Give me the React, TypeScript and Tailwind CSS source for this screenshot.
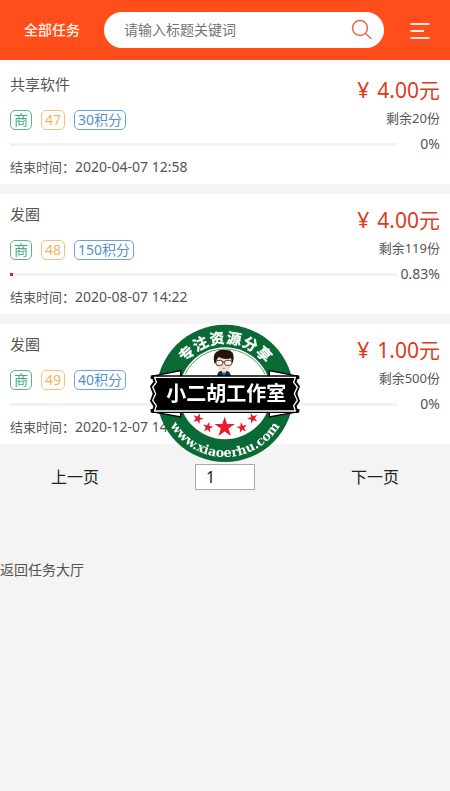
import React, { useState } from 'react';

interface Task {
  id: number;
  title: string;
  points: number;
  price: string;
  remaining: number;
  percent: number;
  endTime: string;
}

const tasks: Task[] = [
  { id: 47, title: '共享软件', points: 30, price: '4.00', remaining: 20, percent: 0, endTime: '2020-04-07 12:58' },
  { id: 48, title: '发圈', points: 150, price: '4.00', remaining: 119, percent: 0.83, endTime: '2020-08-07 14:22' },
  { id: 49, title: '发圈', points: 40, price: '1.00', remaining: 500, percent: 0, endTime: '2020-12-07 14:22' },
];

const SearchIcon: React.FC = () => (
  <svg width="22" height="22" viewBox="0 0 22 22" fill="none" stroke="#e8694a" strokeWidth="1.5">
    <circle cx="9" cy="9" r="7.5" />
    <path d="M14.5 14.5 L20.5 20" />
  </svg>
);

const MenuIcon: React.FC = () => (
  <svg width="20" height="18" viewBox="0 0 20 18" fill="none" stroke="#ffeadf" strokeWidth="2">
    <path d="M0.5 3 H19.5 M0.5 10 H14 M0.5 17 H19.5" />
  </svg>
);

const Header: React.FC = () => (
  <header className="flex h-16 items-center border-b-4 border-[#fafafa] bg-[#ff4e1c] pr-5 pl-6">
    <a href="#all" className="text-sm font-medium text-[#fff1e6]">
      全部任务
    </a>
    <form
      className="ml-6 flex h-9 min-w-0 flex-1 items-center rounded-[18px] bg-white pr-[11px] pl-5"
      onSubmit={(e) => e.preventDefault()}
    >
      <input
        type="text"
        aria-label="搜索任务"
        placeholder="请输入标题关键词"
        className="min-w-0 flex-1 text-sm outline-none placeholder:text-[#757575]"
      />
      <button type="submit" aria-label="搜索">
        <SearchIcon />
      </button>
    </form>
    <button type="button" aria-label="菜单" className="ml-[26px]">
      <MenuIcon />
    </button>
  </header>
);

const TaskCard: React.FC<{ task: Task }> = ({ task }) => (
  <li className="bg-white px-2.5 pt-2.5 pb-2 text-[#555]">
    <div className="flex justify-between">
      <div className="flex flex-col justify-between">
        <h2 className="text-[15px] leading-5">{task.title}</h2>
        <div className="flex gap-[9px] text-sm leading-[18px]">
          <span className="rounded-[5px] border border-[#5cb58a] px-[3px] text-[#45ab7b]">商</span>
          <span className="rounded-[5px] border border-[#f2c37c] px-[3px] text-[#f0b45c]">{task.id}</span>
          <span className="rounded-[5px] border border-[#6ea3d6] px-[3px] text-[#5590cc]">{task.points}积分</span>
        </div>
      </div>
      <div className="text-right">
        <p className="flex justify-end gap-2 text-[21px] leading-8 text-[#dc3c1e]">
          <span>¥</span>
          <span>{task.price}元</span>
        </p>
        <p className="text-[13px] leading-6">剩余{task.remaining}份</p>
      </div>
    </div>
    <div className="flex items-center leading-7">
      <div className="h-[3px] flex-1 bg-[#f2f2f2]">
        <div className="h-full bg-[#c8281e]" style={{ width: `${task.percent}%` }} />
      </div>
      <span className="w-[43px] text-right text-sm leading-7">{task.percent}%</span>
    </div>
    <p className="flex text-[13px] leading-[18px]">
      结束时间：<span className="text-sm leading-[18px]">{task.endTime}</span>
    </p>
  </li>
);

const Pagination: React.FC = () => {
  const [page, setPage] = useState('1');

  return (
    <nav className="grid grid-cols-3 items-center justify-items-center pt-5 text-base text-[#222]">
      <button type="button">上一页</button>
      <input
        type="text"
        aria-label="页码"
        value={page}
        onChange={(e) => setPage(e.target.value)}
        className="h-[26px] w-[60px] border border-[#aaa] bg-white px-2.5"
      />
      <button type="button">下一页</button>
    </nav>
  );
};

const star = (cx: number, cy: number, r: number, tilt: number) =>
  Array.from({ length: 10 }, (_, i) => {
    const a = ((tilt - 90 + i * 36) * Math.PI) / 180;
    const d = i % 2 ? r * 0.38 : r;
    return `${cx + d * Math.cos(a)},${cy + d * Math.sin(a)}`;
  }).join(' ');

const StudioBadge: React.FC = () => (
  <svg width="170" height="161" viewBox="0 0 510 483">
    <circle cx="255" cy="235" r="206" fill="#0a6a36" />
    <circle cx="255" cy="235" r="138" fill="#fff" />
    <path d="M135 178 A133 133 0 0 1 375 178" fill="none" stroke="#0a6a36" strokeWidth="2" />

    {/* slogan, one character at a time round the ring */}
    <g fill="#fff" stroke="#fff" strokeWidth="1" fontSize="44" fontWeight="700" textAnchor="middle">
      {'专注资源分享'.split('').map((char, i) => (
        <g key={char} transform={`rotate(${-44 + i * 17.8} 255 235)`}>
          <text x="255" y="85">{char}</text>
        </g>
      ))}
    </g>

    {/* mascot */}
    <path d="M231 186 Q231 170 243 167 H260 Q272 170 273 186 Z" fill="#1c2440" />
    <path d="M244 166 L252 182 L260 166 Z" fill="#fff" />
    <path d="M250 170 H254 L256 186 H248 Z" fill="#2f62c4" />
    <path d="M225 132 Q225 168 251 168 Q277 168 277 132 Q268 116 250 118 Q232 116 225 132 Z" fill="#f7dcc8" />
    <path
      d="M223 145 Q217 118 230 110 Q240 102 258 105 Q283 106 281 128 Q280 140 277 146 L273 130 Q254 136 236 126 Q228 134 227 145 Z"
      fill="#24130f"
    />
    <g fill="#fff" fillOpacity="0.8" stroke="#4a3a38" strokeWidth="3">
      <rect x="228" y="136" width="20" height="15" rx="6" />
      <rect x="254" y="136" width="21" height="15" rx="6" />
      <path d="M248 141 H254" />
    </g>
    <path d="M247 160 H255" stroke="#b8604e" strokeWidth="2" />

    <g fill="#e81c2e">
      <polygon points={star(254, 337, 32, 0)} />
      <polygon points={star(174, 311, 17, 20)} />
      <polygon points={star(204, 337, 17, 12)} />
      <polygon points={star(306, 338, 17, -12)} />
      <polygon points={star(338, 310, 17, -20)} />
    </g>

    {/* ribbon */}
    <g stroke="#000" strokeWidth="4" fill="#fff">
      <path d="M34 184 L122 167 V190 H34 Z" />
      <path d="M476 184 L388 167 V190 H476 Z" />
      <path d="M34 290 L122 306 V284 H34 Z" />
      <path d="M476 290 L388 306 V284 H476 Z" />
    </g>
    <path
      d="M34 181 H476 L470 200 L480 214 L472 236 L480 258 L470 274 L476 294 H34 L40 274 L30 258 L38 236 L30 214 L40 200 Z"
      fill="#000"
    />
    <path
      d="M44 187 H466 L461 202 L472 216 L463 236 L472 256 L461 272 L466 288 H44 L49 272 L38 256 L47 236 L38 216 L49 202 Z"
      fill="#000"
      stroke="#fff"
      strokeWidth="4"
    />
    <text x="259" y="259" fontSize="60" fontWeight="700" fill="#fff" textAnchor="middle">
      小二胡工作室
    </text>

    <path id="badge-arc" d="M64 235 A191 191 0 0 0 446 235" fill="none" />
    <text
      className="font-['DejaVu_Serif',serif]"
      fontSize="38"
      fontWeight="700"
      fill="#fff"
      textAnchor="middle"
    >
      <textPath href="#badge-arc" startOffset="50%">
        www.xiaoerhu.com
      </textPath>
    </text>
  </svg>
);

export default function App() {
  return (
    <div className="min-h-screen bg-[#f4f4f4] font-['Noto_Sans','Noto_Sans_CJK_SC',sans-serif]">
      <Header />
      <main>
        <ul className="flex flex-col gap-2.5">
          {tasks.map((task) => (
            <TaskCard key={task.id} task={task} />
          ))}
        </ul>
        <Pagination />
        <a href="#hall" className="mt-[70px] inline-block text-sm text-[#555]">
          返回任务大厅
        </a>
      </main>
      <div className="pointer-events-none fixed inset-0 flex items-center justify-center">
        <StudioBadge />
      </div>
    </div>
  );
}
